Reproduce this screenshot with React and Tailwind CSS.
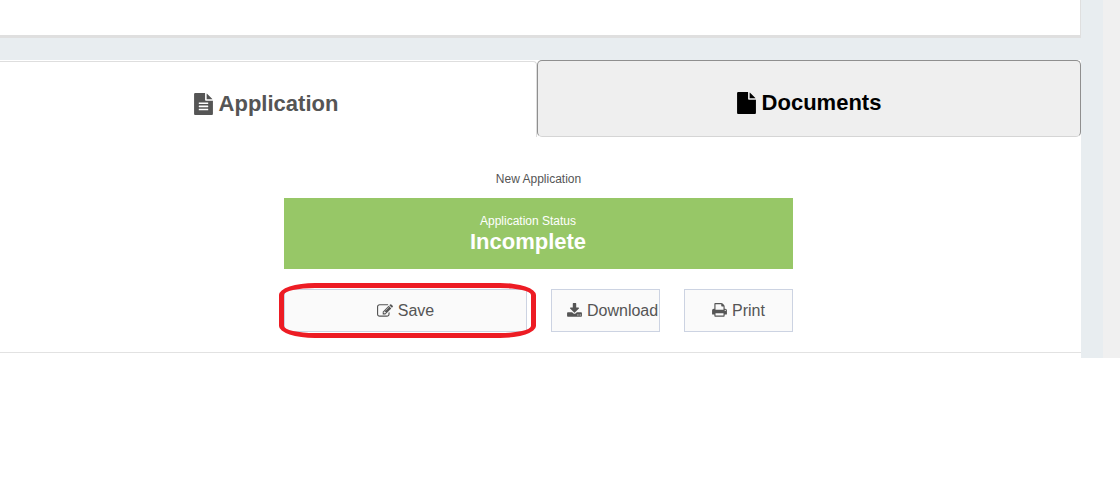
import React, { useState } from 'react';

// --- SVG Icon Components ---

const FileTextIcon = () => (
    <svg viewBox="128 0 1536 1792" fill="currentColor" className="h-[22px] w-[19px] shrink-0" aria-hidden="true">
        <path d="M1596 476q14 14 28 36h-472v-472q22 14 36 28zm-476 164h544v1056q0 40-28 68t-68 28h-1344q-40 0-68-28t-28-68v-1600q0-40 28-68t68-28h800v544q0 40 28 68t68 28zm160 736v-64q0-14-9-23t-23-9h-704q-14 0-23 9t-9 23v64q0 14 9 23t23 9h704q14 0 23-9t9-23zm0-256v-64q0-14-9-23t-23-9h-704q-14 0-23 9t-9 23v64q0 14 9 23t23 9h704q14 0 23-9t9-23zm0-256v-64q0-14-9-23t-23-9h-704q-14 0-23 9t-9 23v64q0 14 9 23t23 9h704q14 0 23-9t9-23z" />
    </svg>
);

const FileIcon = () => (
    <svg viewBox="128 0 1536 1792" fill="currentColor" className="h-[22px] w-[19px] shrink-0" aria-hidden="true">
        <path d="M1152 512v-472q22 14 36 28l408 408q14 14 28 36h-472zm-128 32q0 40 28 68t68 28h544v1056q0 40-28 68t-68 28h-1344q-40 0-68-28t-28-68v-1600q0-40 28-68t68-28h800v544z" />
    </svg>
);

const EditIcon = () => (
    <svg viewBox="0 0 1792 1792" fill="currentColor" className="size-4 shrink-0" aria-hidden="true">
        <path d="M888 1184l116-116-152-152-116 116v56h96v96h56zm440-720q-16-16-33 1l-350 350q-17 17-1 33t33-1l350-350q17-17 1-33zm80 594v190q0 119-84.5 203.5t-203.5 84.5h-832q-119 0-203.5-84.5t-84.5-203.5v-832q0-119 84.5-203.5t203.5-84.5h832q63 0 117 25 15 7 18 23 3 17-9 29l-49 49q-14 14-32 8-23-6-45-6h-832q-66 0-113 47t-47 113v832q0 66 47 113t113 47h832q66 0 113-47t47-113v-126q0-13 9-22l64-64q15-15 35-7t20 29zm-96-738l288 288-672 672h-288v-288zm444 132l-92 92-288-288 92-92q28-28 68-28t68 28l152 152q28 28 28 68t-28 68z" />
    </svg>
);

const DownloadIcon = () => (
    <svg viewBox="64 0 1664 1792" fill="currentColor" className="h-4 w-[15px] shrink-0" aria-hidden="true">
        <path d="M1344 1344q0-26-19-45t-45-19-45 19-19 45 19 45 45 19 45-19 19-45zm256 0q0-26-19-45t-45-19-45 19-19 45 19 45 45 19 45-19 19-45zm128-224v320q0 40-28 68t-68 28h-1472q-40 0-68-28t-28-68v-320q0-40 28-68t68-28h465l135 136q58 56 136 56t136-56l136-136h464q40 0 68 28t28 68zm-325-569q17 41-14 70l-448 448q-18 19-45 19t-45-19l-448-448q-31-29-14-70 17-39 59-39h256v-448q0-26 19-45t45-19h256q26 0 45 19t19 45v448h256q42 0 59 39z" />
    </svg>
);

const PrintIcon = () => (
    <svg viewBox="64 128 1664 1792" fill="currentColor" className="h-4 w-[15px] shrink-0" aria-hidden="true">
        <path d="M448 1536h896v-256h-896v256zm0-640h896v-384h-160q-40 0-68-28t-28-68v-160h-640v640zm1152 64q0-26-19-45t-45-19-45 19-19 45 19 45 45 19 45-19 19-45zm128 0v416q0 13-9.5 22.5t-22.5 9.5h-224v160q0 40-28 68t-68 28h-960q-40 0-68-28t-28-68v-160h-224q-13 0-22.5-9.5t-9.5-22.5v-416q0-79 56.500-135.500t135.500-56.500h64v-544q0-40 28-68t68-28h672q40 0 88 20t76 48l152 152q28 28 48 76t20 88v256h64q79 0 135.500 56.500t56.500 135.500z" />
    </svg>
);

// --- UI Components ---

const Tab = ({ active, onClick, icon, children }) => (
    <button
        type="button"
        role="tab"
        aria-selected={active}
        onClick={onClick}
        className={`flex items-center justify-center gap-[6px] pt-2 text-[22px] font-bold ${
            active
                ? 'mt-px rounded-tr-[4px] border-t border-r border-[#dedede] bg-white pr-[4px] text-[#555]'
                : 'rounded-[5px] border border-[#8f8f8f] border-b-[#d5d5d5] bg-[#efefef] text-black'
        }`}
    >
        {icon}
        {children}
    </button>
);

const ActionButton = ({ icon, children, className = 'w-[109px]' }) => (
    <button
        type="button"
        className={`flex h-[43px] items-center justify-center-safe gap-[5px] border border-[#ccd3e2] bg-[#fafafa] px-[15px] text-base whitespace-nowrap text-[#555] hover:bg-gray-100 ${className}`}
    >
        {icon}
        {children}
    </button>
);

// --- Main App Component ---

function App() {
    const [tab, setTab] = useState('application');

    return (
        <div className="min-h-screen bg-white font-['Liberation_Sans',Arial,sans-serif] text-[#555]">
            <div className="flex bg-[#e8edf0]">
                <main className="min-w-0 flex-1">
                    {/* Bottom edge of the previous panel */}
                    <div className="h-[38px] border-r border-b-3 border-[#dfdfdf] bg-white"></div>

                    <section className="mt-[22px] bg-white">
                        <div role="tablist" className="grid h-[77px] grid-cols-[537fr_544fr]">
                            <Tab active={tab === 'application'} onClick={() => setTab('application')} icon={<FileTextIcon />}>
                                Application
                            </Tab>
                            <Tab active={tab === 'documents'} onClick={() => setTab('documents')} icon={<FileIcon />}>
                                Documents
                            </Tab>
                        </div>

                        <div className="border-b border-[#e2e2e2] pt-8 pr-1 pb-5">
                            <div className="mx-auto w-full max-w-[509px]">
                                <p className="text-center text-xs leading-5">New Application</p>

                                <div className="mt-[9px] bg-[#97c767] pt-[14px] pr-[21px] pb-4 text-center text-white">
                                    <p className="text-xs leading-[18px]">Application Status</p>
                                    <p className="text-[22px] leading-[23px] font-bold">Incomplete</p>
                                </div>

                                <div className="mt-5 flex gap-6">
                                    <div className="relative flex flex-1">
                                        <ActionButton icon={<EditIcon />} className="flex-1">Save</ActionButton>
                                        {/* Hand-drawn highlight around the save button */}
                                        <div className="pointer-events-none absolute -top-[6px] -right-[9px] -bottom-[6px] -left-[5px] rounded-[36px/12px] border-5 border-[#ed1c24]"></div>
                                    </div>
                                    <ActionButton icon={<DownloadIcon />}>Download</ActionButton>
                                    <ActionButton icon={<PrintIcon />}>Print</ActionButton>
                                </div>
                            </div>
                        </div>
                        <div className="h-[5px]"></div>
                    </section>
                </main>
                <div className="w-[22px]"></div>
                <div className="w-[17px] bg-[#f0f0f0]"></div>
            </div>
        </div>
    );
}

export default App;
